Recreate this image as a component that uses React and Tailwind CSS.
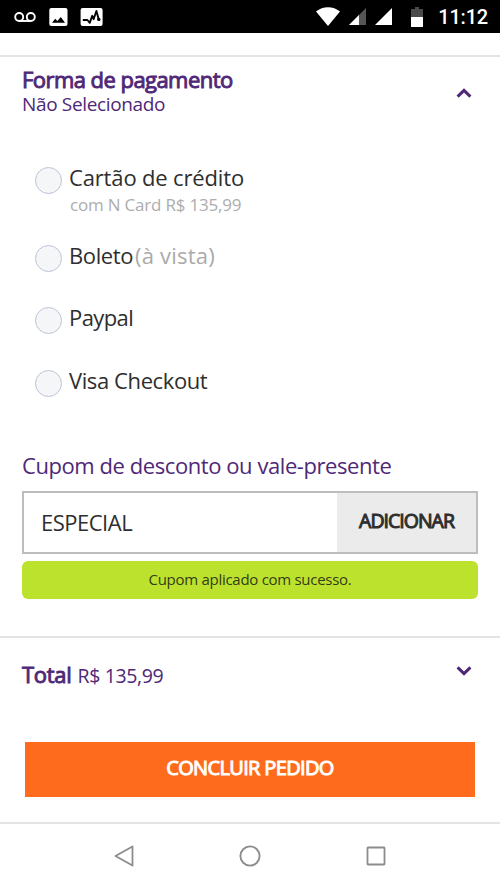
import { useState } from "react";
import clsx from "clsx";

const paymentOptions = [
  {
    id: "card",
    label: "Cartão de crédito",
    detail: "com N Card R$ 135,99",
    row: "h-[78px]",
    tracking: "tracking-[-0.15px]",
  },
  {
    id: "boleto",
    label: "Boleto",
    note: "(à vista)",
    row: "h-[62px]",
    tracking: "tracking-[-0.4px]",
  },
  {
    id: "paypal",
    label: "Paypal",
    row: "h-[63px]",
    tracking: "tracking-[-0.6px]",
  },
  {
    id: "visa",
    label: "Visa Checkout",
    row: "h-[84px]",
    tracking: "tracking-[-0.4px]",
  },
];

const StatusBar = () => (
  <header className="flex h-[33px] shrink-0 items-center justify-between bg-black pl-[14px] pr-[12px] text-white">
    <div className="flex items-center">
      {/* Voicemail */}
      <svg width="22" height="12" viewBox="0 0 22 12" fill="none" stroke="white" strokeWidth="1.9">
        <circle cx="5.2" cy="6" r="4" />
        <circle cx="16.8" cy="6" r="4" />
        <path d="M5.2 10h11.6" />
      </svg>
      {/* Picture */}
      <svg className="ml-[13px]" width="19" height="18" viewBox="0 0 19 18">
        <rect x="0.3" width="18.2" height="18" rx="2" fill="white" />
        <path d="M3 14.7l3.2-4 2.2 2.2 3.4-4 4.2 5.8z" fill="black" />
      </svg>
      {/* Activity */}
      <svg className="ml-3" width="23" height="18" viewBox="0 0 23 18">
        <rect x="0.6" width="22" height="18" rx="2" fill="white" />
        <path
          d="M2.8 12h4.6l2.4 2.8 2.4-7 1.4 3.4L16.4 3l2.4 8.4"
          fill="none"
          stroke="black"
          strokeWidth="1.9"
          strokeLinejoin="round"
        />
        <circle cx="18.8" cy="11.4" r="1.7" fill="black" />
      </svg>
    </div>

    <div className="flex items-center">
      {/* Wifi */}
      <svg width="24" height="19" viewBox="0 0 24 19">
        <path d="M0 4.6C6.8-1.2 17.2-1.2 24 4.6L12 19z" fill="white" />
      </svg>
      {/* Signal */}
      <svg className="ml-[9px]" width="17" height="17" viewBox="0 0 17 17">
        <path d="M17 0v17H0z" fill="#555" />
        <path d="M10 7v10H0z" fill="white" />
      </svg>
      <svg className="ml-[9px]" width="17" height="17" viewBox="0 0 17 17">
        <path d="M17 0v17H0z" fill="white" />
      </svg>
      {/* Battery */}
      <svg className="ml-[19px]" width="12" height="20" viewBox="0 0 12 20">
        <path d="M4 0h4v2h4v8H0V2h4z" fill="#4a4a4a" />
        <path d="M0 10h12v10H0z" fill="white" />
      </svg>
      <span className="ml-[15px] font-[Roboto,sans-serif] text-[20px] font-medium leading-none tracking-[-0.2px]">
        11:12
      </span>
    </div>
  </header>
);

const Chevron = ({ up = false }) => (
  <svg
    className={clsx(up && "rotate-180")}
    width="16"
    height="10"
    viewBox="0 0 16 10"
    fill="none"
    stroke="#4f2877"
    strokeWidth="3"
  >
    <path d="M1.6 1.4L8 7.6l6.4-6.2" />
  </svg>
);

const PaymentOption = ({ option, checked, onSelect }) => (
  <label className={clsx("flex items-start pl-[13px]", option.row)}>
    <input
      type="radio"
      name="payment"
      checked={checked}
      onChange={onSelect}
      className="mt-1 size-[27px] shrink-0 appearance-none rounded-full border border-[#bcc3d6] bg-[#f4f6f7] checked:bg-[#4f2877]"
    />
    <span className="ml-[7px] flex flex-col">
      <span className="flex whitespace-nowrap text-[22px] leading-[29px] text-[#2e2e2e]">
        <span className={option.tracking}>{option.label}</span>
        {option.note && <span className="ml-[2px] tracking-[0.2px] text-[#aaa]">{option.note}</span>}
      </span>
      {option.detail && (
        <span className="ml-px mt-px whitespace-nowrap text-[17px] leading-6 tracking-[-0.2px] text-[#adadad]">
          {option.detail}
        </span>
      )}
    </span>
  </label>
);

const NavBar = () => (
  <nav className="flex h-[67px] shrink-0 items-center justify-around border-t-2 border-[#e4e4e4] px-[62px] pb-[2px]">
    <svg width="20" height="22" viewBox="0 0 20 22" fill="none" stroke="#8c8c8c" strokeWidth="1.8" strokeLinejoin="round">
      <path d="M18.5 1.5v19L1.5 11z" />
    </svg>
    <svg width="22" height="22" viewBox="0 0 22 22" fill="none" stroke="#8c8c8c" strokeWidth="1.9">
      <circle cx="11" cy="11" r="9.6" />
    </svg>
    <svg width="20" height="20" viewBox="0 0 20 20" fill="none" stroke="#8c8c8c" strokeWidth="1.8">
      <rect x="1.5" y="1.5" width="17" height="17" rx="0.5" />
    </svg>
  </nav>
);

const App = () => {
  const [selected, setSelected] = useState(null);
  const [coupon, setCoupon] = useState("ESPECIAL");

  return (
    <div className="flex h-[889px] w-[500px] flex-col overflow-hidden bg-white font-['Open_Sans','Noto_Sans',sans-serif]">
      <StatusBar />

      {/* Payment */}
      <section className="mt-[22px] h-[581px] border-t-2 border-[#e4e4e4] px-[22px] pt-[9px]">
        <div className="flex h-[97px] items-start justify-between pr-[6px]">
          <div className="whitespace-nowrap text-[#4f2877]">
            <h2 className="text-[22px] leading-[27px] tracking-[-0.55px] [-webkit-text-stroke:0.9px]">
              Forma de pagamento
            </h2>
            <p className="text-[19px] leading-[22px] tracking-[-0.35px]">Não Selecionado</p>
          </div>
          <div className="mt-[22px]">
            <Chevron up />
          </div>
        </div>

        {paymentOptions.map((option) => (
          <PaymentOption
            key={option.id}
            option={option}
            checked={selected === option.id}
            onSelect={() => setSelected(option.id)}
          />
        ))}

        {/* Coupon */}
        <h3 className="whitespace-nowrap text-[22px] leading-[30px] tracking-[-0.43px] text-[#4f2877]">
          Cupom de desconto ou vale-presente
        </h3>
        <div className="mt-[11px] flex h-[63px] border-2 border-[#bdbdbd]">
          <input
            value={coupon}
            onChange={(e) => setCoupon(e.target.value)}
            className="min-w-0 flex-1 pl-[17px] text-[22px] tracking-[-0.5px] text-[#2e2e2e] outline-none"
          />
          <button className="w-[139px] bg-[#ebebeb] pb-[3px] text-[19.5px] tracking-[-1px] text-[#2e2e2e] [-webkit-text-stroke:1px]">
            ADICIONAR
          </button>
        </div>
        <p className="mt-[7px] flex h-[38px] items-center justify-center rounded-md bg-[#bde22e] pb-px text-[15px] tracking-[-0.28px] text-[#333d14]">
          Cupom aplicado com sucesso.
        </p>
      </section>

      {/* Total */}
      <section className="h-[186px] border-t-2 border-[#e4e4e4] px-[22px] pt-[22px]">
        <div className="flex h-[82px] items-start justify-between pr-[6px] text-[#4f2877]">
          <p className="flex items-baseline whitespace-nowrap leading-7">
            <span className="text-[22px] tracking-[-0.3px] [-webkit-text-stroke:0.9px]">Total</span>
            <span className="ml-[6px] text-[19.5px] tracking-[-0.35px]">R$ 135,99</span>
          </p>
          <div className="mt-[6px]">
            <Chevron />
          </div>
        </div>
        <button className="mx-[3px] h-[55px] w-[450px] bg-[#ff6b1c] pb-[3px] text-[20px] tracking-[-0.65px] text-white [-webkit-text-stroke:1px]">
          CONCLUIR PEDIDO
        </button>
      </section>

      <NavBar />
    </div>
  );
};

export default App;
